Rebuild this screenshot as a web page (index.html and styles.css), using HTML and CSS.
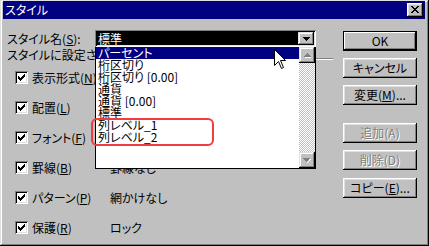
FILE: index.html
```html
<!DOCTYPE html>
<html lang="ja">
<head>
  <meta charset="UTF-8">
  <title>スタイル</title>
  <link rel="stylesheet" href="styles.css">
</head>
<body>

  <div class="window">
    <div class="titlebar">
      <span class="title">スタイル</span>
      <span class="close-btn">
        <svg width="16" height="14" viewBox="0 0 16 14" shape-rendering="crispEdges">
          <path d="M4 3h2v1h-2zM10 3h2v1h-2zM5 4h2v1h-2zM9 4h2v1h-2zM6 5h4v1h-4zM7 6h2v1h-2zM6 7h4v1h-4zM5 8h2v1h-2zM9 8h2v1h-2zM4 9h2v1h-2zM10 9h2v1h-2z" fill="#000"/>
        </svg>
      </span>
    </div>

    <div class="client">
      <div class="main">
        <div class="name-row">
          <span class="name-label">スタイル名(<u>S</u>):</span>
          <div class="combo">
            <span class="combo-text">標準</span>
            <span class="combo-btn">
              <svg width="7" height="4" viewBox="0 0 7 4" shape-rendering="crispEdges">
                <path d="M0 0h7v1h-7zM1 1h5v1h-5zM2 2h3v1h-3zM3 3h1v1h-1z" fill="#000"/>
              </svg>
            </span>
          </div>
        </div>

        <div class="group-head">
          <span class="group-label">スタイルに設定されている書式</span>
          <span class="etched"></span>
        </div>

        <!-- チェック項目（値はリストの下に隠れている） -->
        <div class="check-row">
          <span class="checkbox"></span>
          <span class="check-label">表示形式(<u>N</u>)</span>
          <span class="check-value"></span>
        </div>
        <div class="check-row">
          <span class="checkbox"></span>
          <span class="check-label">配置(<u>L</u>)</span>
          <span class="check-value"></span>
        </div>
        <div class="check-row">
          <span class="checkbox"></span>
          <span class="check-label">フォント(<u>F</u>)</span>
          <span class="check-value"></span>
        </div>
        <div class="check-row">
          <span class="checkbox"></span>
          <span class="check-label">罫線(<u>B</u>)</span>
          <span class="check-value">罫線なし</span>
        </div>
        <div class="check-row">
          <span class="checkbox"></span>
          <span class="check-label">パターン(<u>P</u>)</span>
          <span class="check-value">網かけなし</span>
        </div>
        <div class="check-row">
          <span class="checkbox"></span>
          <span class="check-label">保護(<u>R</u>)</span>
          <span class="check-value">ロック</span>
        </div>
      </div>

      <div class="buttons">
        <div class="btn default">OK</div>
        <div class="btn">キャンセル</div>
        <div class="btn">変更(<u>M</u>)...</div>
        <div class="btn disabled gap">追加(A)</div>
        <div class="btn disabled">削除(D)</div>
        <div class="btn copy">コピー(<u>E</u>)...</div>
      </div>
    </div>

    <!-- 開いたドロップダウン -->
    <div class="dropdown">
      <div class="items">
        <div class="item selected">パーセント</div>
        <div class="item">桁区切り</div>
        <div class="item">桁区切り [0.00]</div>
        <div class="item">通貨</div>
        <div class="item">通貨 [0.00]</div>
        <div class="item">標準</div>
        <div class="mark">
          <div class="item">列レベル_1</div>
          <div class="item">列レベル_2</div>
        </div>
      </div>
      <div class="scrollbar">
        <span class="sb-btn">
          <svg width="7" height="5" viewBox="0 0 7 5" shape-rendering="crispEdges">
            <path d="M4 1h1v1h-1zM5 2h1v1h-1zM6 3h1v1h-1zM1 4h7v1h-7z" fill="#fff"/>
            <path d="M3 0h1v1h-1zM2 1h3v1h-3zM1 2h5v1h-5zM0 3h7v1h-7z" fill="#808080"/>
          </svg>
        </span>
        <span class="sb-track"></span>
        <span class="sb-btn">
          <svg width="8" height="5" viewBox="0 0 8 5" shape-rendering="crispEdges">
            <path d="M1 1h7v1h-7zM6 2h1v1h-1zM5 3h1v1h-1zM4 4h1v1h-1z" fill="#fff"/>
            <path d="M0 0h7v1h-7zM1 1h5v1h-5zM2 2h3v1h-3zM3 3h1v1h-1z" fill="#808080"/>
          </svg>
        </span>
      </div>
    </div>

    <svg class="cursor" width="13" height="21" viewBox="0 0 13 21">
      <path d="M0.5 0.5V16.5L4.5 12.5L7.5 19.5L9.5 18.5L6.5 11.5H11.5Z" fill="#fff" stroke="#000" stroke-width="1"/>
    </svg>
  </div>

</body>
</html>
```

FILE: styles.css
```css
* {
  box-sizing: border-box;
}

body {
  margin: 0;
  font-family: "Noto Sans CJK JP", "Noto Sans CJK SC", sans-serif;
  font-size: 12px;
  font-feature-settings: "palt";
  color: #000;
  background-color: #c0c0c0;
}

u {
  text-decoration: underline;
  text-underline-offset: 1px;
}

.window {
  position: relative;
  width: 429px;
  height: 246px;
  padding: 1px 4px 4px 3px;
  background-color: #c0c0c0;
  box-shadow: inset -1px -1px #000, inset 1px 1px #dfdfdf,
              inset -2px -2px #808080, inset 2px 2px #fff;
  overflow: hidden;
}

/* タイトルバー */
.titlebar {
  height: 18px;
  display: flex;
  align-items: center;
  justify-content: space-between;
  padding: 0 2px;
  background-color: #000080;
  color: #fff;
}

.title {
  line-height: 18px;
}

.close-btn {
  width: 16px;
  height: 14px;
  display: block;
  background-color: #c0c0c0;
  box-shadow: inset -1px -1px #000, inset 1px 1px #fff,
              inset -2px -2px #808080, inset 2px 2px #dfdfdf;
}

.close-btn svg {
  display: block;
}

.client {
  display: flex;
  height: 223px;
}

.main {
  flex: 1;
  padding: 11px 0 0 4px;
}

.name-row {
  display: flex;
  align-items: center;
  height: 17px;
}

.name-label {
  width: 88px;
  line-height: 14px;
}

.combo {
  width: 221px;
  height: 17px;
  display: flex;
  padding: 2px;
  background-color: #fff;
  box-shadow: inset 1px 1px #808080, inset -1px -1px #fff,
              inset 2px 2px #000, inset -2px -2px #dfdfdf;
}

.combo-text {
  flex: 1;
  background-color: #000;
  color: #fff;
  line-height: 13px;
  padding-left: 1px;
}

.combo-btn {
  width: 16px;
  display: flex;
  align-items: center;
  justify-content: center;
  background-color: #c0c0c0;
  box-shadow: inset -1px -1px #000, inset 1px 1px #dfdfdf,
              inset -2px -2px #808080, inset 2px 2px #fff;
}

.combo-btn svg {
  display: block;
}

.group-head {
  display: flex;
  align-items: flex-start;
  height: 14px;
  margin-top: 1px;
  line-height: 14px;
  white-space: nowrap;
}

/* リストの左端で切れる */
.group-label {
  width: 88px;
  overflow: hidden;
}

.etched {
  flex: 1;
  height: 2px;
  margin: 10px 10px 0 0;
  border-top: 1px solid #808080;
  border-bottom: 1px solid #fff;
}

.check-row {
  display: flex;
  align-items: center;
  height: 30px;
  padding-left: 8px;
  white-space: nowrap;
}

.checkbox {
  width: 13px;
  height: 13px;
  margin-right: 4px;
  flex-shrink: 0;
  background-color: #fff;
  box-shadow: inset 1px 1px #808080, inset -1px -1px #fff,
              inset 2px 2px #000, inset -2px -2px #dfdfdf;
  background-image: url("data:image/svg+xml,%3Csvg xmlns='http://www.w3.org/2000/svg' width='13' height='13' shape-rendering='crispEdges'%3E%3Cpath d='M3 5h1v3h-1zM4 6h1v3h-1zM5 7h1v3h-1zM6 6h1v3h-1zM7 5h1v3h-1zM8 4h1v3h-1zM9 3h1v3h-1z' fill='%23000'/%3E%3C/svg%3E");
}

.check-label {
  width: 78px;
}

/* 右側のボタン */
.buttons {
  width: 74px;
  margin-right: 8px;
  padding-top: 5px;
}

.btn {
  height: 20px;
  margin-top: 7px;
  text-align: center;
  line-height: 20px;
  background-color: #c0c0c0;
  box-shadow: inset -1px -1px #000, inset 1px 1px #fff,
              inset -2px -2px #808080, inset 2px 2px #dfdfdf;
}

.btn.default {
  box-shadow: inset 0 0 0 1px #000, inset -2px -2px #000,
              inset 2px 2px #fff, inset -3px -3px #808080;
}

.btn.gap {
  margin-top: 18px;
}

.btn.copy {
  margin-top: 8px;
}

.btn.disabled {
  color: #808080;
  text-shadow: 1px 1px #fff;
}

/* ドロップダウンリスト */
.dropdown {
  position: absolute;
  left: 95px;
  top: 47px;
  width: 221px;
  height: 122px;
  display: flex;
  background-color: #fff;
  border: 1px solid #000;
  border-top: none;
}

.items {
  flex: 1;
}

.item {
  height: 12px;
  line-height: 12px;
  padding-left: 2px;
  white-space: nowrap;
}

.item.selected {
  background-color: #000080;
  color: #fff;
}

.mark {
  position: relative;
}

.mark::after {
  content: "";
  position: absolute;
  left: -5px;
  top: -1px;
  width: 119px;
  bottom: -3px;
  border: 2px solid #f03c3c;
  border-radius: 6px;
}

.scrollbar {
  width: 16px;
  display: flex;
  flex-direction: column;
}

.sb-btn {
  height: 16px;
  display: flex;
  align-items: center;
  justify-content: center;
  background-color: #c0c0c0;
  box-shadow: inset -1px -1px #000, inset 1px 1px #dfdfdf,
              inset -2px -2px #808080, inset 2px 2px #fff;
}

.sb-track {
  flex: 1;
  background: repeating-conic-gradient(#c0c0c0 0 25%, #fff 0 50%) 0 0 / 2px 2px;
}

.cursor {
  position: absolute;
  left: 274px;
  top: 49px;
}
```
